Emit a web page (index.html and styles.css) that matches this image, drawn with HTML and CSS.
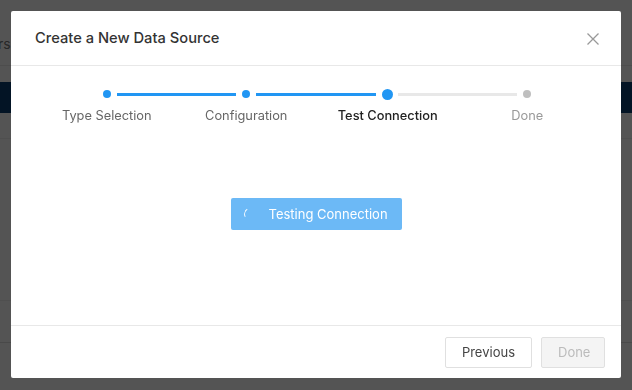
FILE: index.html
```html
<!DOCTYPE html>
<html>
    <head>
        <meta charset="UTF-8">
        <title>Create a New Data Source</title>
        <link rel="stylesheet" href="styles.css">
    </head>
    <body>
        <div class="page">
            <div class="page-top"><span class="page-tab">Users</span></div>
            <div class="page-row active"></div>
            <div class="page-row list"></div>
            <div class="page-row tall"></div>
            <div class="page-row"></div>
        </div>

        <div class="overlay">
            <div class="modal">
                <div class="modal-header">
                    <h2>Create a New Data Source</h2>
                    <svg class="close" width="14" height="14" viewBox="0 0 14 14">
                        <path d="M1.5 1.5 L12.5 12.5 M12.5 1.5 L1.5 12.5" stroke="#999" stroke-width="1.3" fill="none"/>
                    </svg>
                </div>

                <div class="modal-body">
                    <div class="steps">
                        <div class="step finished">
                            <div class="track"><span class="dot"></span></div>
                            <p>Type Selection</p>
                        </div>
                        <div class="step finished">
                            <div class="track"><span class="dot"></span></div>
                            <p>Configuration</p>
                        </div>
                        <div class="step current">
                            <div class="track"><span class="dot"></span></div>
                            <p>Test Connection</p>
                        </div>
                        <div class="step waiting">
                            <div class="track"><span class="dot"></span></div>
                            <p>Done</p>
                        </div>
                    </div>

                    <div class="testing">
                        <button class="btn-loading">
                            <span class="spinner"></span>
                            Testing Connection
                        </button>
                    </div>
                </div>

                <div class="modal-footer">
                    <button class="btn">Previous</button>
                    <button class="btn disabled">Done</button>
                </div>
            </div>
        </div>
    </body>
</html>
```

FILE: styles.css
```css
* {
    margin: 0;
    padding: 0;
    box-sizing: border-box;
}

html, body {
    width: 100%;
    height: 100%;
}

body {
    font-family: "Inter", "Noto Sans", sans-serif;
    background-color: #fff;
    overflow: hidden;
}

/* page behind the dialog */
.page-top {
    height: 66px;
    border-bottom: 1px solid #e8e8e8;
    padding-top: 35px;
    overflow: hidden;
}

.page-tab {
    display: block;
    margin-left: -28px;
    font-size: 14px;
    color: #777;
    white-space: nowrap;
}

.page-row {
    border-bottom: 1px solid #eee;
}

.page-row.active {
    margin-top: 16px;
    height: 31px;
    background-color: #0a3f70;
    border-bottom: none;
}

.page-row.list {
    height: 26px;
}

.page-row.tall {
    height: 162px;
}

.page-row:last-child {
    height: 42px;
    border-bottom-color: #ddd;
}

/* dialog */
.overlay {
    position: fixed;
    top: 0;
    left: 0;
    width: 100%;
    height: 100%;
    background-color: rgba(0, 0, 0, 0.67);
    padding: 11px;
}

.modal {
    width: 610px;
    height: 367px;
    background-color: #fff;
    border-radius: 2px;
    display: flex;
    flex-direction: column;
}

.modal-header {
    height: 55px;
    border-bottom: 1px solid #e8e8e8;
    padding: 0 24px;
    display: flex;
    align-items: center;
    justify-content: space-between;
}

.modal-header h2 {
    font-size: 14.7px;
    font-weight: 500;
    color: #333;
}

.close {
    margin-right: -3px;
    margin-top: 2px;
}

.modal-body {
    flex: 1;
    padding: 23px 26px 0 26px;
}

.steps {
    display: flex;
}

.step {
    flex: 1;
    text-align: center;
}

.step.current,
.step.waiting {
    position: relative;
    left: 2px;
}

.track {
    height: 10px;
    position: relative;
    display: flex;
    justify-content: center;
    align-items: center;
}

.track::after {
    content: "";
    position: absolute;
    left: calc(50% + 10px);
    width: calc(100% - 20px);
    top: 4px;
    height: 3px;
    background-color: #2196f3;
}

.step:last-child .track::after {
    display: none;
}

.step.current .track::after {
    background-color: #e8e8e8;
}

.dot {
    width: 8px;
    height: 8px;
    border-radius: 50%;
    background-color: #2196f3;
}

.step.current .dot {
    width: 11px;
    height: 11px;
}

.step.waiting .dot {
    background-color: #bfbfbf;
}

.step p {
    margin-top: 9px;
    font-size: 12.8px;
    color: #666;
}

.step.current p {
    color: #222;
    font-weight: 500;
}

.step.waiting p {
    color: #999;
}

.testing {
    display: flex;
    justify-content: center;
    margin-top: 75px;
}

.btn-loading {
    width: 171px;
    height: 32px;
    border: none;
    border-radius: 2px;
    background-color: #6cb9f6;
    color: #fff;
    font-family: inherit;
    font-size: 13px;
    display: flex;
    align-items: center;
    padding-left: 13px;
    gap: 13px;
}

.spinner {
    width: 12px;
    height: 12px;
    border-radius: 50%;
    border: 1.5px solid transparent;
    border-left-color: rgba(255, 255, 255, 0.9);
    transform: rotate(15deg);
}

.modal-footer {
    height: 53px;
    border-top: 1px solid #e8e8e8;
    padding: 0 16px;
    display: flex;
    justify-content: flex-end;
    align-items: center;
    gap: 9px;
}

.btn {
    height: 31px;
    padding: 0 16px;
    border: 1px solid #e0e0e0;
    border-radius: 2px;
    background-color: #fff;
    color: #444;
    font-family: inherit;
    font-size: 13px;
}

.btn.disabled {
    background-color: #f4f4f4;
    color: #bbb;
    width: 64px;
}
```
